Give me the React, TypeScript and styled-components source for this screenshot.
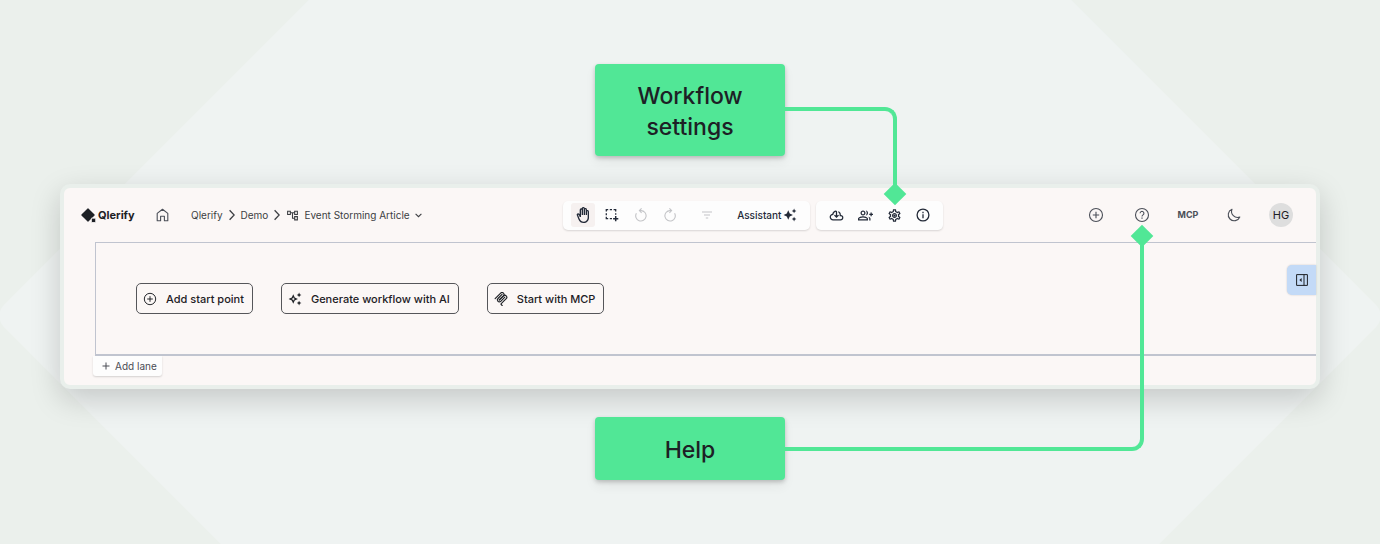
import React from 'react';
import styled, { createGlobalStyle, css } from 'styled-components';
import {
  MdAutoAwesome,
  MdOutlineAccountTree,
  MdOutlineAutoAwesome,
  MdOutlineBackHand,
  MdOutlineGroupAdd,
  MdOutlineSettings,
} from 'react-icons/md';

const green = '#51e796';
const ink = '#1d2025';

const GlobalStyle = createGlobalStyle`
  *, *::before, *::after { box-sizing: border-box; }
  body {
    margin: 0;
    background: #ebf0ec;
    color: ${ink};
    font-family: Inter, "Liberation Sans", sans-serif;
  }
  button { font: inherit; color: inherit; border: 0; background: none; padding: 0; cursor: pointer; }
  a { color: inherit; text-decoration: none; }
  svg { display: block; flex: none; }
`;

const Page = styled.main`
  position: relative;
  min-height: 100vh;
  padding: 64px 60px;
  display: flex;
  flex-direction: column;
  align-items: center;
  gap: 28px;
  overflow: hidden;
`;

const Backdrop = styled.svg`
  position: absolute;
  top: 0;
  left: 50%;
  transform: translateX(-50%);
`;

const Callout = styled.div`
  position: relative;
  display: flex;
  align-items: center;
  justify-content: center;
  width: 190px;
  min-height: 63px;
  padding: 17px 24px 13px;
  border-radius: 4px;
  background: ${green};
  box-shadow: 0 2px 4px rgba(0, 0, 0, 0.2), 0 6px 12px rgba(0, 0, 0, 0.06);
  font-size: 23px;
  line-height: 31px;
  font-weight: 500;
  text-align: center;
`;

const diamond = css`
  content: '';
  position: absolute;
  width: 16px;
  height: 16px;
  background: ${green};
  transform: rotate(45deg);
`;

const SettingsConnector = styled.div`
  position: absolute;
  z-index: 1;
  left: 100%;
  top: 43px;
  width: 112px;
  height: 84px;
  border-top: 4px solid ${green};
  border-right: 4px solid ${green};
  border-top-right-radius: 12px;
  &::after { ${diamond} right: -10px; bottom: -11px; }
`;

const HelpConnector = styled.div`
  position: absolute;
  z-index: 1;
  left: calc(50% + 95px);
  right: 172px;
  top: 48px;
  bottom: -66px;
  border-bottom: 4px solid ${green};
  border-right: 4px solid ${green};
  border-bottom-right-radius: 12px;
  pointer-events: none;
  &::after { ${diamond} right: -10px; top: -8px; }
`;

const Frame = styled.section`
  position: relative;
  align-self: stretch;
  border: 4px solid #e9efeb;
  border-radius: 10px;
  background: #fbf7f6;
  padding-bottom: 9px;
  box-shadow: 0 10px 30px rgba(0, 0, 0, 0.18);
`;

const Header = styled.header`
  display: flex;
  align-items: center;
  justify-content: space-between;
  height: 54px;
  padding: 0 23px 0 17px;
`;

const Group = styled.div<{ $gap: number }>`
  display: flex;
  align-items: center;
  gap: ${(p) => p.$gap}px;
`;

const Logo = styled.a`
  display: flex;
  align-items: center;
  gap: 2px;
  width: 53px;
  font-size: 11px;
  line-height: 16px;
  font-weight: 700;
`;

const HomeLink = styled.a`
  color: #4b4f58;
`;

const Crumbs = styled.nav`
  display: flex;
  align-items: center;
  gap: 6px;
  font-size: 10px;
  line-height: 16px;
  color: #3c3e42;
`;

const CrumbMenu = styled.button`
  display: flex;
  align-items: center;
  gap: 5px;
`;

const Toolbar = styled.div`
  display: flex;
  align-items: center;
  height: 29px;
  padding: 0 8px;
  gap: 5px;
  border-radius: 5px;
  background: #fdfdfd;
  box-shadow: 0 1px 2px rgba(0, 0, 0, 0.14);
`;

const Tool = styled.button<{ $active?: boolean }>`
  display: flex;
  align-items: center;
  justify-content: center;
  width: 24px;
  height: 24px;
  border-radius: 3px;
  color: #232a38;
  background: ${(p) => (p.$active ? '#f6f1f0' : 'transparent')};
  &:disabled { color: #c3c4c7; }
`;

const FilterTool = styled(Tool)`
  margin: 0 8px;
`;

const Assistant = styled.button`
  display: flex;
  align-items: center;
  gap: 2px;
  padding: 0 5px;
  font-size: 10px;
  line-height: 16px;
  font-weight: 500;
  color: #232a38;
`;

const HeaderButton = styled.button`
  display: flex;
  justify-content: center;
  width: 22px;
  color: #4b4f58;
  font-size: 9px;
  line-height: 16px;
  font-weight: 700;
`;

const Avatar = styled.button`
  width: 24px;
  height: 24px;
  border-radius: 50%;
  background: #dedede;
  font-size: 11px;
  line-height: 24px;
`;

const Lane = styled.div`
  position: relative;
  display: flex;
  align-items: center;
  gap: 28px;
  height: 114px;
  margin-left: 31px;
  padding-left: 40px;
  border: solid #c0c4cf;
  border-width: 1px 0 2px 1px;
`;

const StartButton = styled.button`
  display: flex;
  align-items: center;
  gap: 9px;
  height: 31px;
  padding: 0 8px 0 6px;
  border: 1px solid #55565a;
  border-radius: 5px;
  font-size: 11px;
  line-height: 16px;
  font-weight: 500;
`;

const PanelToggle = styled.button`
  position: absolute;
  right: 0;
  top: 22px;
  display: flex;
  align-items: center;
  width: 29px;
  height: 30px;
  padding-left: 9px;
  border-radius: 5px 0 0 5px;
  background: #c3daf7;
  box-shadow: 0 0 2px rgba(0, 0, 0, 0.2);
`;

const AddLane = styled.button`
  display: flex;
  align-items: center;
  gap: 5px;
  height: 20px;
  margin-left: 29px;
  padding: 0 5px 0 9px;
  border-radius: 0 0 3px 3px;
  background: #fdfdfd;
  box-shadow: 0 1px 2px rgba(0, 0, 0, 0.16);
  font-size: 10px;
  line-height: 16px;
  color: #4b4c55;
`;

const LogoMark = () => (
  <svg width="15" height="15" viewBox="0 0 15 15" fill={ink}>
    <path d="M7 .9 13.1 7 7 13.1.9 7Z" stroke={ink} strokeWidth="1.2" strokeLinejoin="round" />
    <path d="M10.4 10.2h4.300v4.300h-4.300z" stroke="#fbf7f6" strokeWidth=".8" />
  </svg>
);

const HomeIcon = () => (
  <svg width="13" height="14" viewBox="0 0 13 14" fill="none" stroke="currentColor" strokeWidth="1.1" strokeLinejoin="round">
    <path d="M1.2 5.4 6.5 1.2l5.3 4.2v7.4H8.4V8.2H4.6v4.6H1.2z" />
  </svg>
);

const Chevron = () => (
  <svg width="6" height="12" viewBox="0 0 6 12" fill="none" stroke="currentColor" strokeWidth="1.3">
    <path d="M.6 1.2 5.2 6 .6 10.8" />
  </svg>
);

const ChevronDown = () => (
  <svg width="7" height="5" viewBox="0 0 7 5" fill="none" stroke="currentColor" strokeWidth="1.1">
    <path d="M.6.8 3.5 3.7 6.4.8" />
  </svg>
);

const SelectAreaIcon = () => (
  <svg width="14" height="14" viewBox="0 0 14 14" fill="none" stroke="currentColor" strokeWidth="1.3">
    <path d="M1.3 3.6V1.7h1.9M4.8 1.7h2.2M8.6 1.7h2.1v1.9M1.3 5.2v2M1.3 8.8v1.9h1.9M4.8 10.7h2.2M10.7 5.2v1.6" />
    <path d="M10.7 8.1v5.2M8.1 10.7h5.2" strokeWidth="1.5" />
  </svg>
);

const UndoIcon = (props: React.SVGProps<SVGSVGElement>) => (
  <svg width="14" height="14" viewBox="0 0 14 14" fill="none" stroke="currentColor" strokeWidth="1.1" {...props}>
    <path d="M2.4 5.2A5.2 5.2 0 1 0 7 2.6H5.8" />
    <path d="M7.6.4 5.4 2.6l2.2 2.2" />
  </svg>
);

const RedoIcon = styled(UndoIcon)`
  transform: scaleX(-1);
`;

const FilterIcon = () => (
  <svg width="12" height="8" viewBox="0 0 12 8" stroke="currentColor" strokeWidth="1.1">
    <path d="M1 1h10M3 4h6M4.8 7h2.4" />
  </svg>
);

const CloudDownloadIcon = () => (
  <svg width="15" height="15" viewBox="0 -960 960 960" fill="currentColor">
    <path d="M260-160q-91 0-155.500-63T40-377q0-78 47-139t123-78q17-72 85-137t145-65q33 0 56.500 23.500T520-716v242l64-62 56 56-160 160-160-160 56-56 64 62v-242q-76 14-118 73.500T280-520h-20q-58 0-99 41t-41 99q0 58 41 99t99 41h480q42 0 71-29t29-71q0-42-29-71t-71-29h-60v-80q0-48-22-89.500T600-680v-93q74 35 117 103.500T760-520q69 8 114.500 59.500T920-340q0 75-52.500 127.500T740-160H260Z" />
  </svg>
);

const GearIcon = () => (
  <svg width="15" height="15" viewBox="0 0 24 24" fill="currentColor">
    <MdOutlineSettings size={24} />
    <circle cx="12" cy="12" r="1.800" />
  </svg>
);

const InfoIcon = () => (
  <svg width="14" height="14" viewBox="0 0 14 14" fill="none" stroke="currentColor" strokeWidth="1.3">
    <circle cx="7" cy="7" r="5.9" />
    <path d="M7 6.3v3.9M7 3.8v1.400" />
  </svg>
);

const AddCircleIcon = ({ size = 16 }: { size?: number }) => (
  <svg width={size} height={size} viewBox="0 0 16 16" fill="none" stroke="currentColor" strokeWidth="1.1">
    <circle cx="8" cy="8" r="6.500" />
    <path d="M8 4.800v6.400M4.800 8h6.400" />
  </svg>
);

const HelpIcon = () => (
  <svg width="16" height="16" viewBox="0 0 16 16" fill="none" stroke="currentColor" strokeWidth="1.100">
    <circle cx="8" cy="8" r="6.500" />
    <path d="M6.100 6.300a1.900 1.900 0 1 1 2.900 1.600c-.6.4-1 .7-1 1.500" />
    <path d="M8 10.500v1.300" strokeWidth="1.200" />
  </svg>
);

const MoonIcon = () => (
  <svg width="16" height="16" viewBox="0 0 16 16" fill="none" stroke="currentColor" strokeWidth="1.100" strokeLinejoin="round">
    <path d="M6 2.200a6 6 0 1 0 7.800 7.800A6 6 0 0 1 6 2.200Z" />
  </svg>
);

const McpIcon = () => (
  <svg width="14" height="14" viewBox="4 4 172 172" fill="none" stroke="currentColor" strokeWidth="14" strokeLinecap="round">
    <path d="M18 84.85 85.88 16.97c9.37-9.37 24.57-9.37 33.94 0s9.37 24.57 0 33.94L68.56 102.18" />
    <path d="m69.27 101.47 50.55-50.56c9.37-9.37 24.57-9.37 33.95 0l.35.36c9.37 9.37 9.37 24.56 0 33.94L92.72 146.6a8 8 0 0 0 0 11.31l12.61 12.61" />
    <path d="M102.85 33.94 52.65 84.15c-9.37 9.37-9.37 24.56 0 33.94s24.57 9.37 33.94 0l50.2-50.21" />
  </svg>
);

const PanelIcon = () => (
  <svg width="12" height="12" viewBox="0 0 12 12" fill="none" stroke="currentColor">
    <path d="M.6.6h10.8v10.8H.6zM8 .6v10.8" />
    <path d="M5.6 4 3.4 6l2.2 2z" fill="currentColor" stroke="none" />
  </svg>
);

const PlusIcon = () => (
  <svg width="8" height="8" viewBox="0 0 8 8" stroke="currentColor">
    <path d="M4 .5v7M.5 4h7" />
  </svg>
);

export default function App() {
  return (
    <Page>
      <GlobalStyle />
      <Backdrop width="1400" height="1100" viewBox="0 0 1400 1100" aria-hidden="true">
        <rect x="207" y="-177" width="986" height="986" rx="16" transform="rotate(45 700 316)" fill="#eff3f2" />
      </Backdrop>

      <Callout>
        Workflow settings
        <SettingsConnector />
      </Callout>

      <Frame>
        <Header>
          <Group $gap={22}>
            <Logo href="#"><LogoMark />Qlerify</Logo>
            <HomeLink href="#" aria-label="Home"><HomeIcon /></HomeLink>
            <Crumbs aria-label="Breadcrumb">
              <a href="#">Qlerify</a>
              <Chevron />
              <a href="#">Demo</a>
              <Chevron />
              <CrumbMenu>
                <MdOutlineAccountTree size={13} />
                Event Storming Article
                <ChevronDown />
              </CrumbMenu>
            </Crumbs>
          </Group>

          <Group $gap={6}>
            <Toolbar>
              <Tool $active aria-label="Pan"><MdOutlineBackHand size={16} /></Tool>
              <Tool aria-label="Select area"><SelectAreaIcon /></Tool>
              <Tool disabled aria-label="Undo"><UndoIcon /></Tool>
              <Tool disabled aria-label="Redo"><RedoIcon /></Tool>
              <FilterTool disabled aria-label="Filter"><FilterIcon /></FilterTool>
              <Assistant>Assistant<MdAutoAwesome size={14} /></Assistant>
            </Toolbar>
            <Toolbar>
              <Tool aria-label="Download"><CloudDownloadIcon /></Tool>
              <Tool aria-label="Invite people"><MdOutlineGroupAdd size={15} /></Tool>
              <Tool aria-label="Workflow settings"><GearIcon /></Tool>
              <Tool aria-label="Information"><InfoIcon /></Tool>
            </Toolbar>
          </Group>

          <Group $gap={24}>
            <HeaderButton aria-label="New"><AddCircleIcon /></HeaderButton>
            <HeaderButton aria-label="Help"><HelpIcon /></HeaderButton>
            <HeaderButton>MCP</HeaderButton>
            <HeaderButton aria-label="Dark mode"><MoonIcon /></HeaderButton>
            <Avatar aria-label="Account">HG</Avatar>
          </Group>
        </Header>

        <Lane>
          <StartButton><AddCircleIcon size={14} />Add start point</StartButton>
          <StartButton><MdOutlineAutoAwesome size={14} />Generate workflow with AI</StartButton>
          <StartButton><McpIcon />Start with MCP</StartButton>
          <PanelToggle aria-label="Open side panel"><PanelIcon /></PanelToggle>
        </Lane>
        <AddLane><PlusIcon />Add lane</AddLane>
        <HelpConnector />
      </Frame>

      <Callout>Help</Callout>
    </Page>
  );
}
